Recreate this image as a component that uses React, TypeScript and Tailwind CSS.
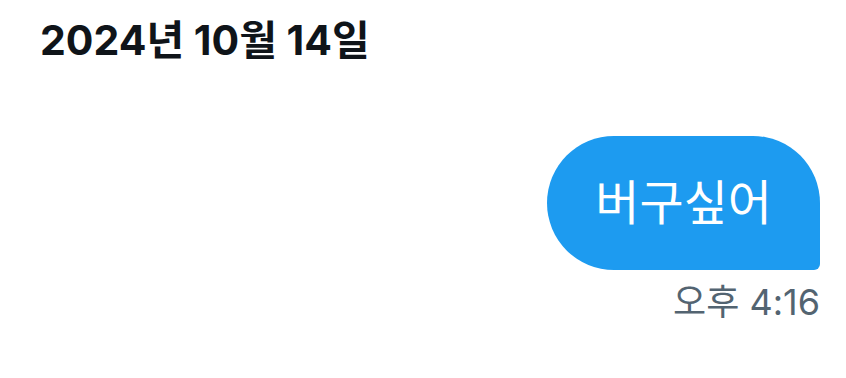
export default function App() {
  return (
    <div
      className="w-[846px] h-[378px] bg-white overflow-hidden"
      style={{ fontFamily: 'Inter, "Noto Sans CJK KR", sans-serif' }}
    >
      <div className="px-10 pt-[12px]">
        <h1 className="text-[41px] leading-[56px] font-bold text-[#0f1419]">2024년 10월 14일</h1>
      </div>
      <div className="flex flex-col items-end pr-[26px] pt-[68px]">
        <div className="flex h-[134px] items-center rounded-[67px] rounded-br-[6px] bg-[#1d9bf0] px-[48px]">
          <span className="text-[48px] leading-none text-white">버구싶어</span>
        </div>
        <div className="mt-[12px] text-[36px] leading-[40px] text-[#536471]">오후 4:16</div>
      </div>
    </div>
  );
}
